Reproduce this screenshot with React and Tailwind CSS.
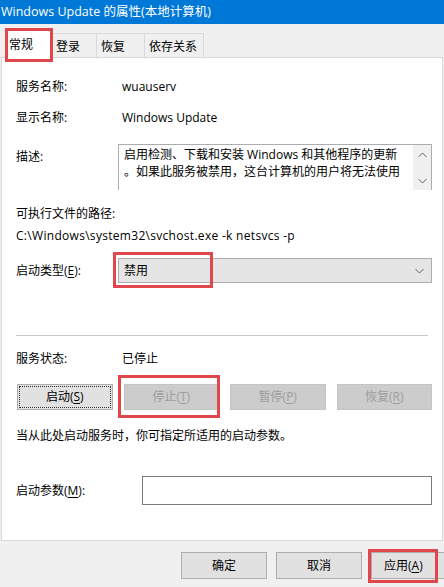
import React from "react";

// red annotation box drawn over the dialog
const Mark = ({ className }) => (
  <span className={`pointer-events-none absolute border-[3px] border-[#e0474c] ${className}`} />
);

const Chevron = ({ up = false }) => (
  <svg width="9" height="6" viewBox="0 0 9 6" className="block">
    <polyline
      points={up ? "0.5,5 4.5,1 8.5,5" : "0.5,1 4.5,5 8.5,1"}
      fill="none"
      stroke="#606060"
      strokeWidth="1"
    />
  </svg>
);

const Key = ({ children }) => <span className="underline underline-offset-2">{children}</span>;

const Tab = ({ label, width, active }) =>
  active ? (
    <div className={`${width} h-[29px] -mb-px bg-white border border-b-0 border-[#d9d9d9] pl-[2px] pt-[7px] leading-[16px]`}>
      {label}
    </div>
  ) : (
    <div className={`${width} h-[24px] bg-[#f0f0f0] border-t border-r border-[#d9d9d9] pl-[4px] pt-[5px] leading-[16px]`}>
      {label}
    </div>
  );

export default function App() {
  return (
    <div className="relative w-[444px] h-[587px] overflow-hidden bg-[#f0f0f0] text-[12px] text-black font-['Open_Sans','Noto_Sans_CJK_SC',sans-serif]">
      {/* title bar */}
      <div className="h-[24px] bg-[#0078d7] text-white text-[12.5px] pl-[1px] flex items-center whitespace-nowrap">
        Windows Update 的属性(本地计算机)
      </div>

      {/* tabs */}
      <div className="h-[34px] flex items-end pl-[6px] border-b border-[#d9d9d9]">
        <Tab label="常规" width="w-[46px]" active />
        <Tab label="登录" width="w-[45px]" />
        <Tab label="恢复" width="w-[48px]" />
        <Tab label="依存关系" width="w-[59px]" />
      </div>

      {/* general page */}
      <div className="ml-px w-[442px] h-[483px] bg-white border-x border-b border-[#d9d9d9] pl-[14px] pr-[10px] flex flex-col leading-[16px]">
        <div className="mt-[19px] h-5 flex items-center">
          <span className="w-[106px]">服务名称:</span>
          <span>wuauserv</span>
        </div>
        <div className="mt-[11px] h-5 flex items-center">
          <span className="w-[106px]">显示名称:</span>
          <span>Windows Update</span>
        </div>

        <div className="mt-[16px] flex">
          <span className="w-[102px] pt-[5px]">描述:</span>
          <div className="w-[314px] h-[46px] flex border-t border-x border-[#abadb3]">
            <div className="flex-1 px-[5px] pt-px leading-[17px] whitespace-nowrap overflow-hidden">
              <div>启用检测、下载和安装 Windows 和其他程序的更新</div>
              <div>。如果此服务被禁用，这台计算机的用户将无法使用</div>
            </div>
            <div className="w-[18px] bg-[#f0f0f0] flex flex-col items-center justify-between pt-[7px] pb-[6px]">
              <Chevron up />
              <Chevron />
            </div>
          </div>
        </div>

        <div className="mt-[16px]">可执行文件的路径:</div>
        <div className="mt-[6px] whitespace-nowrap tracking-[0.3px]">C:\Windows\system32\svchost.exe -k netsvcs -p</div>

        <div className="mt-[14px] flex items-center">
          <span className="w-[102px]">
            启动类型(<Key>E</Key>):
          </span>
          <div className="w-[314px] h-[25px] bg-[#e5e5e5] border border-[#adadad] flex items-center justify-between pl-[5px] pr-[7px]">
            <span>禁用</span>
            <Chevron />
          </div>
        </div>

        <div className="mt-[52px] mr-[4px] h-px bg-[#c8c8c8]" />

        <div className="mt-[15px] flex">
          <span className="w-[106px]">服务状态:</span>
          <span>已停止</span>
        </div>

        <div className="mt-[17px] pl-px grid grid-cols-4 gap-[11px]">
          <button className="relative h-[26px] bg-[#e1e1e1] border border-[#adadad]">
            <span className="absolute inset-px border border-dotted border-[#333]" />
            启动(<Key>S</Key>)
          </button>
          <button className="h-[26px] bg-[#cccccc] border border-[#c4c4c4] text-[#9d9d9d]">
            停止(<Key>T</Key>)
          </button>
          <button className="h-[26px] bg-[#cccccc] border border-[#c4c4c4] text-[#9d9d9d]">
            暂停(<Key>P</Key>)
          </button>
          <button className="h-[26px] bg-[#cccccc] border border-[#c4c4c4] text-[#9d9d9d]">
            恢复(<Key>R</Key>)
          </button>
        </div>

        <div className="mt-[18px] whitespace-nowrap">当从此处启动服务时，你可指定所适用的启动参数。</div>

        <div className="mt-[32px] flex items-center">
          <span className="w-[126px]">
            启动参数(<Key>M</Key>):
          </span>
          <div className="w-[291px] h-[29px] border border-[#7a7a7a] bg-white" />
        </div>
      </div>

      {/* dialog buttons */}
      <div className="flex gap-[9px] pl-[181px] pt-[11px]">
        <button className="w-[86px] h-[27px] shrink-0 bg-[#e1e1e1] border border-[#adadad]">确定</button>
        <button className="w-[86px] h-[27px] shrink-0 bg-[#e1e1e1] border border-[#adadad]">取消</button>
        <button className="w-[86px] h-[27px] shrink-0 bg-[#e1e1e1] border border-[#adadad] text-left pl-[12px]">
          应用(<Key>A</Key>)
        </button>
      </div>

      <Mark className="left-[5px] top-[28px] w-[48px] h-[34px]" />
      <Mark className="left-[113px] top-[252px] w-[100px] h-[36px]" />
      <Mark className="left-[118px] top-[375px] w-[102px] h-[43px]" />
      <Mark className="left-[368px] top-[549px] w-[70px] h-[34px]" />
    </div>
  );
}
